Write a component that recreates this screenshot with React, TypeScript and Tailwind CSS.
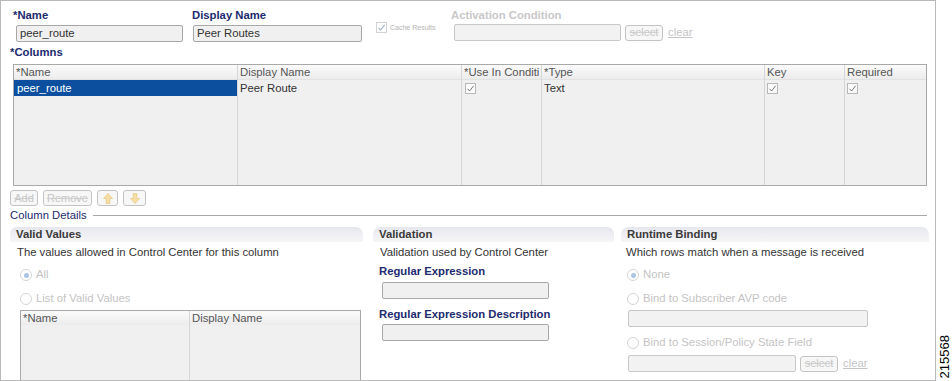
import React from 'react';

const font = "font-['Liberation_Sans',Arial,sans-serif]";

const Check: React.FC<{ className?: string }> = ({ className }) => (
  <span className={`inline-flex items-center justify-center w-[11px] h-[11px] border border-[#b8b8b8] bg-[#fbfbfb] ${className ?? ''}`}>
    <svg width="9" height="9" viewBox="0 0 9 9">
      <path d="M1.5 4.8 L3.6 7 L7.6 1.8" fill="none" stroke="#6b6b6b" strokeWidth="0.9" />
    </svg>
  </span>
);

const Radio: React.FC<{ checked?: boolean; label: string }> = ({ checked, label }) => (
  <div className="flex items-center gap-[4px] text-[#c4c4c4] text-[11.3px] leading-none">
    <span className="w-[12px] h-[12px] rounded-full border border-[#d4d4d4] bg-white flex items-center justify-center">
      {checked && <span className="w-[5px] h-[5px] rounded-full bg-[#a9c4e4]" />}
    </span>
    <span>{label}</span>
  </div>
);

const Input: React.FC<{ w: string; value?: string; disabled?: boolean }> = ({ w, value, disabled }) => (
  <div
    className={`${w} h-[17px] border rounded-[2px] ${disabled ? 'border-[#c8c8c8] bg-[#f2f2f2]' : 'border-[#a8a8a8] bg-[#f0f0f0]'} text-[11.3px] text-[#333] leading-[15px] pl-[3px]`}
  >
    {value}
  </div>
);

const DisabledBtn: React.FC<{ children: React.ReactNode; className?: string }> = ({ children, className }) => (
  <div
    className={`h-[16px] border border-[#c4c4c4] rounded-[3px] bg-[#f7f7f7] flex items-center justify-center text-[11px] text-[#c6c6c6] line-through decoration-[#cfcfcf] ${className ?? ''}`}
  >
    {children}
  </div>
);

const Arrow: React.FC<{ down?: boolean }> = ({ down }) => (
  <svg width="10" height="11" viewBox="0 0 10 11" className={down ? 'rotate-180' : ''}>
    <path d="M5 0.5 L9.5 5.5 L6.8 5.5 L6.8 10.5 L3.2 10.5 L3.2 5.5 L0.5 5.5 Z" fill="#f5dfa6" stroke="#e8c77a" strokeWidth="0.7" />
  </svg>
);

const PanelHeader: React.FC<{ title: string }> = ({ title }) => (
  <div className="h-[15px] rounded-t-[7px] bg-gradient-to-b from-[#e6e7ee] to-[#f6f6f8] pl-[6px] text-[11.3px] font-bold text-[#3a3a3a] leading-[15px]">
    {title}
  </div>
);

const columns = [
  { name: '*Name', w: 'w-[224px]' },
  { name: 'Display Name', w: 'w-[224px]' },
  { name: '*Use In Conditi', w: 'w-[80px]' },
  { name: '*Type', w: 'w-[223px]' },
  { name: 'Key', w: 'w-[80px]' },
  { name: 'Required', w: 'w-[81px]' },
];

export default function App() {
  return (
    <div className={`flex w-[952px] h-[381px] bg-white overflow-hidden ${font}`}>
      <div className="w-[936px] h-[381px] border border-[#b9b9b9] shrink-0 overflow-hidden">
        {/* top fields */}
        <div className="flex pt-[8px] h-[45px]">
          <div className="ml-[12px] w-[179px] flex flex-col">
            <div className="text-[11.3px] font-bold text-[#1c2b6e] leading-[13px]">*Name</div>
            <div className="mt-[3px] ml-[3px]">
              <Input w="w-[167px]" value="peer_route" />
            </div>
          </div>
          <div className="w-[183px] flex flex-col">
            <div className="text-[11.3px] font-bold text-[#1c2b6e] leading-[13px]">Display Name</div>
            <div className="mt-[3px] ml-[1px]">
              <Input w="w-[169px]" value="Peer Routes" />
            </div>
          </div>
          <div className="w-[76px] pt-[13px] pl-[1px] flex items-start gap-[3px]">
            <span className="inline-flex items-center justify-center w-[11px] h-[11px] border border-[#d2d2d2] bg-white">
              <svg width="9" height="9" viewBox="0 0 9 9">
                <path d="M1.5 4.8 L3.6 7 L7.6 1.8" fill="none" stroke="#9fb3c8" strokeWidth="1.1" />
              </svg>
            </span>
            <span className="text-[7px] text-[#b4b4b4] leading-[11px]">Cache Results</span>
          </div>
          <div className="flex flex-col">
            <div className="text-[11.3px] font-bold text-[#c8c8c8] leading-[13px]">Activation Condition</div>
            <div className="mt-[2px] ml-[3px] flex items-center">
              <Input w="w-[167px]" disabled />
              <DisabledBtn className="ml-[4px] w-[38px] h-[15px]">select</DisabledBtn>
              <span className="ml-[5px] text-[11.3px] text-[#c4c4c4] underline">clear</span>
            </div>
          </div>
        </div>

        {/* columns */}
        <div className="ml-[9px] text-[11.3px] font-bold text-[#1c2b6e] leading-[13px]">*Columns</div>
        <div className="ml-[12px] mt-[5px] w-[914px] h-[122px] border border-[#a9a9a9] bg-[#f0f0f0] flex">
          {columns.map((c, i) => (
            <div key={c.name} className={`${c.w} flex flex-col ${i < columns.length - 1 ? 'border-r border-[#d6d6d6]' : ''}`}>
              <div className="h-[15px] bg-gradient-to-b from-[#fbfbfb] to-[#ececec] border-b border-[#e2e2e2] pl-[2px] text-[11.3px] text-[#555] leading-[15px] whitespace-nowrap overflow-hidden">
                {c.name}
              </div>
              <div className="h-[16px] text-[11.3px] leading-[16px]">
                {i === 0 && <div className="h-[16px] bg-[#0b4f9e] text-white pl-[3px]">peer_route</div>}
                {i === 1 && <div className="pl-[2px] text-[#333]">Peer Route</div>}
                {i === 2 && <Check className="ml-[3px] mt-[3px]" />}
                {i === 3 && <div className="pl-[2px] text-[#333]">Text</div>}
                {(i === 4 || i === 5) && <Check className="ml-[2px] mt-[3px]" />}
              </div>
            </div>
          ))}
        </div>

        {/* buttons */}
        <div className="ml-[9px] mt-[4px] flex gap-[5px]">
          <DisabledBtn className="w-[28px]">Add</DisabledBtn>
          <DisabledBtn className="w-[49px]">Remove</DisabledBtn>
          <DisabledBtn className="w-[21px]">
            <Arrow />
          </DisabledBtn>
          <DisabledBtn className="w-[23px]">
            <Arrow down />
          </DisabledBtn>
        </div>

        {/* column details */}
        <div className="ml-[9px] mt-[3px] w-[917px] flex items-center gap-[6px]">
          <span className="text-[11.3px] text-[#1c2b6e] leading-[13px]">Column Details</span>
          <div className="flex-1 h-px bg-[#a9a9a9]" />
        </div>

        <div className="ml-[9px] mt-[5px] flex">
          {/* valid values */}
          <div className="w-[353px] flex flex-col">
            <PanelHeader title="Valid Values" />
            <div className="mt-[4px] pl-[7px] text-[11.3px] text-[#333] leading-[13px]">The values allowed in Control Center for this column</div>
            <div className="mt-[10px] pl-[10px]">
              <Radio checked label="All" />
            </div>
            <div className="mt-[12px] pl-[10px]">
              <Radio label="List of Valid Values" />
            </div>
            <div className="mt-[5px] ml-[10px] w-[341px] h-[80px] border border-[#a9a9a9] bg-[#f0f0f0] flex">
              <div className="w-[169px] border-r border-[#d6d6d6] flex flex-col">
                <div className="h-[14px] bg-gradient-to-b from-[#fbfbfb] to-[#ececec] pl-[2px] text-[11.3px] text-[#555] leading-[14px]">*Name</div>
              </div>
              <div className="flex-1 flex flex-col">
                <div className="h-[14px] bg-gradient-to-b from-[#fbfbfb] to-[#ececec] pl-[2px] text-[11.3px] text-[#555] leading-[14px]">Display Name</div>
              </div>
            </div>
          </div>

          {/* validation */}
          <div className="ml-[10px] w-[241px] flex flex-col">
            <PanelHeader title="Validation" />
            <div className="mt-[4px] pl-[7px] text-[11.3px] text-[#333] leading-[13px]">Validation used by Control Center</div>
            <div className="mt-[6px] pl-[6px] text-[11.3px] font-bold text-[#1c2b6e] leading-[13px]">Regular Expression</div>
            <div className="mt-[4px] ml-[9px]">
              <Input w="w-[167px]" />
            </div>
            <div className="mt-[9px] pl-[6px] text-[11.3px] font-bold text-[#1c2b6e] leading-[13px]">Regular Expression Description</div>
            <div className="mt-[3px] ml-[9px]">
              <Input w="w-[167px]" />
            </div>
          </div>

          {/* runtime binding */}
          <div className="ml-[7px] w-[308px] flex flex-col">
            <PanelHeader title="Runtime Binding" />
            <div className="mt-[4px] pl-[5px] text-[11.3px] text-[#333] leading-[13px]">Which rows match when a message is received</div>
            <div className="mt-[10px] pl-[6px]">
              <Radio checked label="None" />
            </div>
            <div className="mt-[12px] pl-[6px]">
              <Radio label="Bind to Subscriber AVP code" />
            </div>
            <div className="mt-[5px] ml-[7px]">
              <Input w="w-[240px]" disabled />
            </div>
            <div className="mt-[10px] pl-[6px]">
              <Radio label="Bind to Session/Policy State Field" />
            </div>
            <div className="mt-[6px] ml-[7px] flex items-center">
              <Input w="w-[168px]" disabled />
              <DisabledBtn className="ml-[4px] w-[38px] h-[15px]">select</DisabledBtn>
              <span className="ml-[5px] text-[11.3px] text-[#c4c4c4] underline">clear</span>
            </div>
          </div>
        </div>
      </div>
      <div className="flex-1 flex items-end justify-center pb-[3px]">
        <span className="[writing-mode:vertical-rl] rotate-180 text-[13px] text-black leading-none">215568</span>
      </div>
    </div>
  );
}
